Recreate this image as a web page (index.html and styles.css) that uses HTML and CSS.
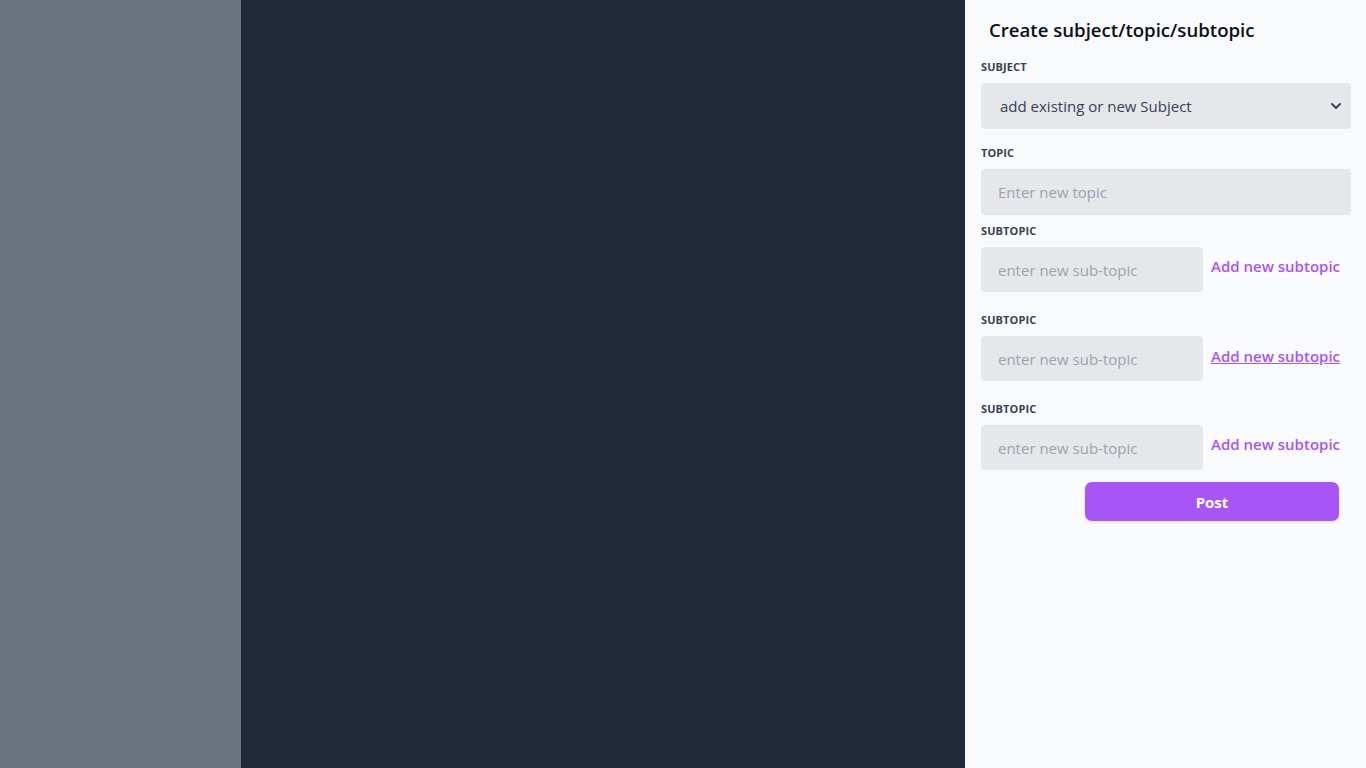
FILE: index.html
```html
<!DOCTYPE html>
<html lang="en">
<head>
<meta charset="utf-8">
<title>Create subject</title>
<link rel="stylesheet" href="styles.css">
</head>
<body>
<div class="layout">
  <aside class="side"></aside>
  <main class="stage"></main>
  <section class="panel">
    <h1 class="title">Create subject/topic/subtopic</h1>
    <form class="form">
      <div class="group g-subject">
        <label class="label">Subject</label>
        <div class="select-wrap">
          <select class="field select">
            <option>add existing or new Subject</option>
          </select>
          <svg class="chev" width="10" height="6" viewBox="0 0 10 6"><path d="M1 1l4 4 4-4" fill="none" stroke="#374151" stroke-width="1.8" stroke-linecap="round" stroke-linejoin="round"/></svg>
        </div>
      </div>
      <div class="group g-topic">
        <label class="label">Topic</label>
        <input class="field" type="text" placeholder="Enter new topic">
      </div>
      <div class="group g-sub">
        <label class="label">Subtopic</label>
        <div class="row">
          <input class="field small" type="text" placeholder="enter new sub-topic">
          <a class="add" href="#">Add new subtopic</a>
        </div>
      </div>
      <div class="group g-sub">
        <label class="label">Subtopic</label>
        <div class="row">
          <input class="field small" type="text" placeholder="enter new sub-topic">
          <a class="add hover" href="#">Add new subtopic</a>
        </div>
      </div>
      <div class="group g-sub last">
        <label class="label">Subtopic</label>
        <div class="row">
          <input class="field small" type="text" placeholder="enter new sub-topic">
          <a class="add" href="#">Add new subtopic</a>
        </div>
      </div>
      <button type="button" class="post">Post</button>
    </form>
  </section>
</div>
</body>
</html>
```

FILE: styles.css
```css
* { box-sizing: border-box; }
html, body { margin: 0; padding: 0; height: 100%; }
body {
  font-family: "Open Sans", "Noto Sans", sans-serif;
  color: #374151;
}
.layout {
  display: flex;
  height: 768px;
}
.side { width: 241px; background: #6b7280; }
.stage { width: 724px; background: #1f2937; }
.panel {
  width: 401px;
  background: #f9fafb;
  padding: 16px 15px 0 16px;
}
.title {
  margin: 0 0 0 8px;
  font-size: 18.6px;
  font-weight: 600;
  color: #0b0f19;
  line-height: 28px;
  height: 28px;
}
.form { margin-top: 15px; }
.label {
  display: block;
  text-transform: uppercase;
  font-size: 11px;
  font-weight: 700;
  line-height: 16px;
  color: #374151;
  margin-bottom: 8px;
  letter-spacing: 0.01em;
}
.field {
  display: block;
  width: 100%;
  height: 46px;
  border: none;
  border-radius: 4px;
  background: #e5e7eb;
  font-family: inherit;
  font-size: 15px;
  color: #374151;
  padding: 0 17px;
  outline: none;
}
.field::placeholder { color: #9ca3af; }
.g-subject { margin-bottom: 16px; }
.g-topic { margin-bottom: 8px; }
.g-sub { margin-bottom: 20px; }
.g-sub.last { margin-bottom: 12px; }
.select-wrap { position: relative; }
.select {
  appearance: none;
  -webkit-appearance: none;
  padding-left: 19px;
}
.chev { position: absolute; right: 10px; top: 20px; }
.row {
  display: flex;
  align-items: center;
  gap: 8px;
}
.small { width: 222px; height: 45px; flex: none; }
.add {
  color: #a855f7;
  font-weight: 600;
  font-size: 15px;
  text-decoration: none;
  margin-top: -8px;
}
.add.hover { text-decoration: underline; margin-top: -5px; }
.post {
  display: block;
  margin-left: 104px;
  width: 254px;
  height: 39px;
  border: none;
  border-radius: 7px;
  background: #a855f7;
  color: #fff;
  font-family: inherit;
  font-weight: 700;
  font-size: 15px;
  box-shadow: 0 1px 3px rgba(0,0,0,0.12);
}
```
